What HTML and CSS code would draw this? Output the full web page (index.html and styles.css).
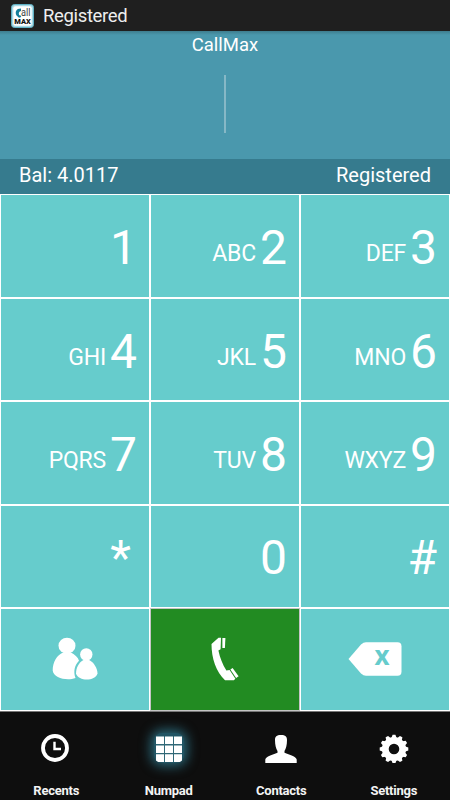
FILE: index.html
```html
<!DOCTYPE html>
<html lang="en">

<head>
    <meta charset="UTF-8">
    <title>CallMax</title>
    <link rel="stylesheet" href="styles.css">
</head>

<body>
    <div class="phone">
        <div class="status-bar">
            <svg class="app-icon" width="23" height="24" viewBox="0 0 23 24">
                <rect x="0.5" y="0.5" width="22" height="23" rx="3" fill="#a8d8e4" stroke="#5fb0c4" />
                <rect x="2.3" y="2.3" width="18.4" height="19.4" rx="2" fill="#fff" />
                <path d="M10 4.500C5 4.500 3.800 8 5.500 11.500l2.500 2.300 2.200-.8-.5-1.500-1.500-.2C7.300 9 8 7.500 10 7z" fill="#167f9b" />
                <text class="logo-call" x="10" y="12" textLength="9.500" lengthAdjust="spacingAndGlyphs">all</text>
                <text class="logo-max" x="3.300" y="19.500" textLength="16.500" lengthAdjust="spacingAndGlyphs">MAX</text>
            </svg>
            <span class="status-title">Registered</span>
        </div>
        <div class="display">
            <div class="account">CallMax</div>
            <div class="cursor"></div>
        </div>
        <div class="info-bar">
            <span class="balance">Bal: 4.0117</span>
            <span class="state">Registered</span>
        </div>

        <div class="keypad">
            <div class="key"><span class="digit">1</span></div>
            <div class="key"><span class="letters">ABC</span><span class="digit">2</span></div>
            <div class="key"><span class="letters">DEF</span><span class="digit">3</span></div>
            <div class="key"><span class="letters">GHI</span><span class="digit">4</span></div>
            <div class="key"><span class="letters">JKL</span><span class="digit">5</span></div>
            <div class="key"><span class="letters">MNO</span><span class="digit">6</span></div>
            <div class="key"><span class="letters">PQRS</span><span class="digit">7</span></div>
            <div class="key"><span class="letters">TUV</span><span class="digit">8</span></div>
            <div class="key"><span class="letters">WXYZ</span><span class="digit">9</span></div>
            <div class="key star"><span class="digit">*</span></div>
            <div class="key"><span class="digit">0</span></div>
            <div class="key"><span class="digit">#</span></div>
            <div class="key action">
                <svg width="46" height="44" viewBox="0 0 46 44" fill="#fff">
                    <ellipse cx="15" cy="8.700" rx="8.500" ry="8" />
                    <path d="M11 15.500h8c4 2 7 5 8 8.200C22.800 28 21 34 23.500 41c-8 3-22 .5-22.800-7.500C.7 25 5 18 11 15.500z" />
                    <circle cx="34.300" cy="17.500" r="6.200" />
                    <path d="M31.500 23h5.600c4.600 2 8.400 8.500 8.400 13.500-2.500 8-19 8-21.500 0 0-5.500 3-11.500 7.500-13.500z" />
                </svg>
            </div>
            <div class="key action call">
                <svg width="28" height="44" viewBox="0 0 28 44" fill="#fff">
                    <path d="M7.500.7H10L9.600 12.200 7.400 13.500c1.600 7.500 4.200 14 8 20l3.200-.5 5.800 8.800-1.600 1.400H14C5 35 .5 21 .5 7z" />
                    <path d="M11.400 1h3l-.5 10h-2.500z" />
                    <path d="M19.400 32.600l2.200-1.600 6 8.200-2.500 1.700z" />
                </svg>
            </div>
            <div class="key action">
                <svg class="backspace" width="54" height="34" viewBox="0 0 54 34">
                    <path d="M.5 17L13 2.500Q15.500.3 18 .3h31.500q4 0 4 4v25.400q0 4-4 4H18q-2.500 0-5-2.200z" fill="#fff" />
                    <text class="clear-x" x="34" y="23.200">x</text>
                </svg>
            </div>
        </div>

        <div class="tab-bar">
            <div class="tab">
                <svg width="30" height="30" viewBox="0 0 30 30" fill="none" stroke="#fff">
                    <circle cx="14" cy="15" r="12" stroke-width="3.800" />
                    <path d="M13.500 8.800v7.200H20" stroke-width="2.400" />
                </svg>
                <span>Recents</span>
            </div>
            <div class="tab active">
                <svg width="30" height="30" viewBox="0 0 30 30">
                    <rect x="2" y="3.500" width="26" height="25.500" fill="#2f6877" />
                    <path d="M2 3.500h8v7.600H2zM11 3.500h8v7.600h-8zM20 3.500h8v7.600h-8zM2 12.500h8v7.600H2zM11 12.500h8v7.600h-8zM20 12.500h8v7.600h-8zM2 21.200h8V29H2zM11 21.200h8V29h-8zM20 21.200h8V29h-8z" fill="#fff" />
                </svg>
                <span>Numpad</span>
            </div>
            <div class="tab">
                <svg width="34" height="30" viewBox="0 0 34 30" fill="#fff">
                    <path d="M17 2c4.500 0 6 1.800 6 5 0 5-1 8.500-2.500 11v1.800c5 2.200 11.700 3.700 12.200 6.700v3.500H1.300v-3.500c.5-3 7.200-4.500 12.200-6.700V18C12 15.500 11 12 11 7c0-3.200 1.500-5 6-5z" />
                </svg>
                <span>Contacts</span>
            </div>
            <div class="tab">
                <svg width="30" height="30" viewBox="-15 -16 30 30">
                    <g fill="#fff">
                        <path id="tooth" d="M-3-10L-1.400-14.300H1.400L3-10z" />
                        <use href="#tooth" transform="rotate(30)" />
                        <use href="#tooth" transform="rotate(60)" />
                        <use href="#tooth" transform="rotate(90)" />
                        <use href="#tooth" transform="rotate(120)" />
                        <use href="#tooth" transform="rotate(150)" />
                        <use href="#tooth" transform="rotate(180)" />
                        <use href="#tooth" transform="rotate(210)" />
                        <use href="#tooth" transform="rotate(240)" />
                        <use href="#tooth" transform="rotate(270)" />
                        <use href="#tooth" transform="rotate(300)" />
                        <use href="#tooth" transform="rotate(330)" />
                    </g>
                    <circle r="8.700" fill="none" stroke="#fff" stroke-width="6.800" />
                </svg>
                <span>Settings</span>
            </div>
        </div>
    </div>
</body>

</html>
```
FILE: styles.css
```css
body {
    font-family: Roboto, sans-serif;
    margin: 0;
    padding: 0;
    color: #fff;
}

.phone {
    width: 450px;
    height: 800px;
    display: flex;
    flex-direction: column;
    overflow: hidden;
}

.status-bar {
    height: 31px;
    background-color: #1f1f1f;
    display: flex;
    align-items: center;
    padding-left: 11px;
    box-sizing: border-box;
}

.status-title {
    margin-left: 9px;
    font-size: 18.5px;
    letter-spacing: -0.35px;
    color: #eee;
}

.logo-call {
    font-size: 10px;
    fill: #444;
}

.logo-max {
    font-size: 6.5px;
    font-weight: 900;
    fill: #111;
}

.display {
    height: 128px;
    background: linear-gradient(#3e7d8e, #4a98ad 4px, #4a98ad);
    display: flex;
    flex-direction: column;
    align-items: center;
}

.account {
    margin-top: 3px;
    font-size: 18.5px;
    line-height: 22px;
}

.cursor {
    width: 2px;
    height: 58px;
    margin-top: 19px;
    background-color: #86b8c6;
}

.info-bar {
    height: 35px;
    padding: 0 19px;
    background-color: #367b8e;
    display: flex;
    justify-content: space-between;
    font-size: 20px;
    line-height: 33px;
}

.keypad {
    height: 517px;
    display: grid;
    grid-template-columns: repeat(3, 1fr);
    grid-template-rows: 104px repeat(4, 1fr);
    background-color: #fff;
}

.key {
    border: 1px solid #fff;
    background-color: #66cccc;
    display: flex;
    justify-content: flex-end;
    align-items: center;
    padding-right: 12px;
}

.digit {
    font-size: 48px;
    line-height: 56px;
    margin-top: 4px;
}

.letters {
    font-size: 23px;
    line-height: 28px;
    letter-spacing: -0.2px;
    margin: 16px 4px 0 0;
}

.star {
    padding-right: 18px;
}

.action {
    justify-content: center;
    padding: 0;
}

.call {
    background-color: #228b22;
    border-color: #c4c4c4;
}

.backspace {
    overflow: visible;
}

.clear-x {
    font-family: "Open Sans", sans-serif;
    font-size: 26px;
    font-weight: bold;
    text-anchor: middle;
    fill: #66cccc;
}

.tab-bar {
    flex: 1;
    display: flex;
    background-color: #0e0e0e;
    border-top: 1px solid #777;
}

.tab {
    flex: 1;
    display: flex;
    flex-direction: column;
    align-items: center;
    padding-top: 21px;
    font-size: 13px;
    font-weight: bold;
    letter-spacing: -0.25px;
    color: #f4f4f4;
}

.tab span {
    line-height: 16px;
    margin-top: 20px;
}

.active svg {
    border-radius: 8px;
    background-color: #215564;
    box-shadow: 0 0 12px 3px #2b6b7c;
}
```
